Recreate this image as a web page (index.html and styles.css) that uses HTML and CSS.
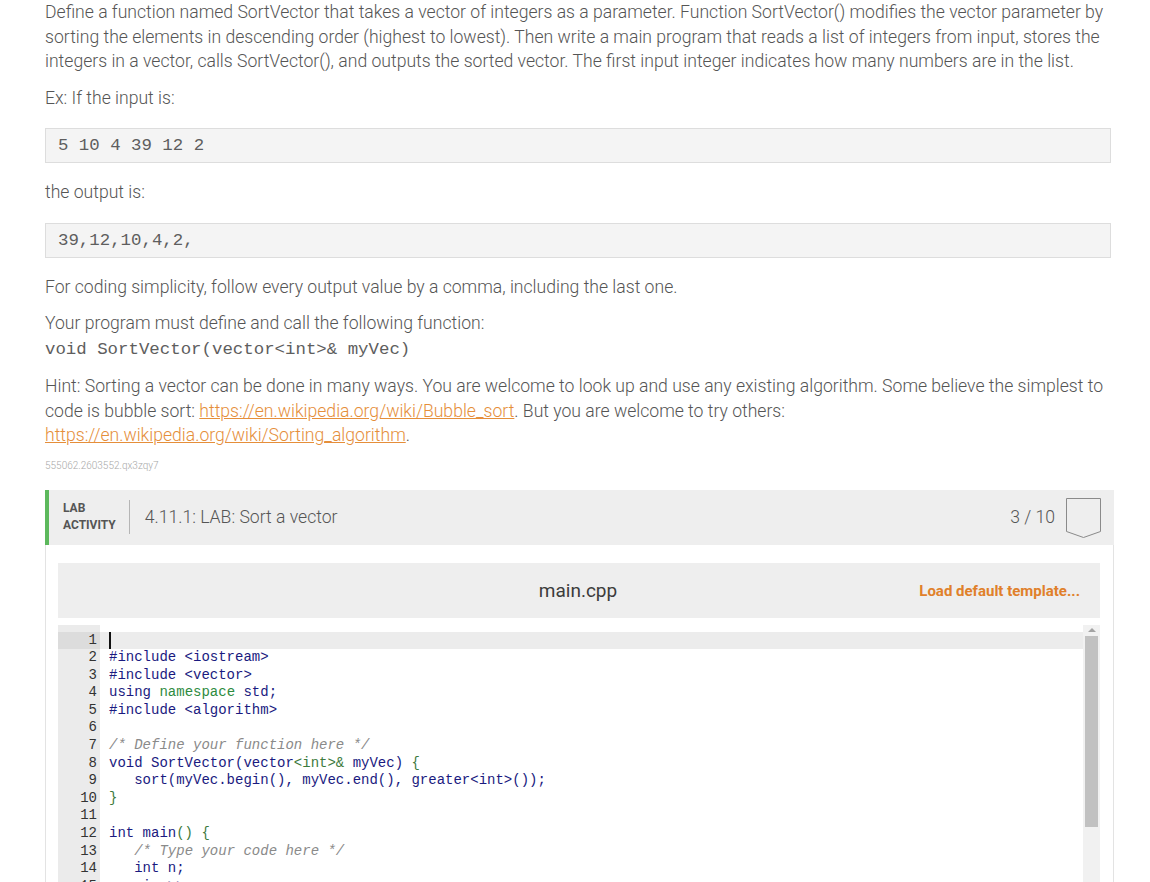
FILE: index.html
```html
<!DOCTYPE html>
<html>
<head>
<meta charset="utf-8">
<link rel="stylesheet" href="styles.css">
</head>
<body>
<div class="page">
  <p class="txt">Define a function named SortVector that takes a vector of integers as a parameter. Function SortVector() modifies the vector parameter by sorting the elements in descending order (highest to lowest). Then write a main program that reads a list of integers from input, stores the integers in a vector, calls SortVector(), and outputs the sorted vector. The first input integer indicates how many numbers are in the list.</p>
  <p class="txt">Ex: If the input is:</p>
  <pre class="sample">5 10 4 39 12 2</pre>
  <p class="txt">the output is:</p>
  <pre class="sample">39,12,10,4,2,</pre>
  <p class="txt">For coding simplicity, follow every output value by a comma, including the last one.</p>
  <p class="txt">Your program must define and call the following function:<br><code class="sig">void SortVector(vector&lt;int&gt;&amp; myVec)</code></p>
  <p class="txt hint">Hint: Sorting a vector can be done in many ways. You are welcome to look up and use any existing algorithm. Some believe the simplest to code is bubble sort: <a class="link" href="#">https://en.wikipedia.org/wiki/Bubble_sort</a>. But you are welcome to try others: <a class="link" href="#">https://en.wikipedia.org/wiki/Sorting_algorithm</a>.</p>
  <p class="uid">555062.2603552.qx3zqy7</p>

  <div class="lab">
    <div class="lab-head">
      <div class="lab-label">LAB<br>ACTIVITY</div>
      <div class="lab-sep"></div>
      <div class="lab-title">4.11.1: LAB: Sort a vector</div>
      <div class="lab-score">3 / 10</div>
      <svg class="badge" width="36" height="41" viewBox="0 0 36 41">
        <polygon points="0.5,0.5 34.5,0.5 34.5,33.5 17.5,39.5 0.5,33.5" fill="none" stroke="#8a8a8a" stroke-width="1"/>
      </svg>
    </div>
    <div class="lab-body">
      <div class="file-bar">
        <span></span>
        <span class="file-name">main.cpp</span>
        <a class="load" href="#">Load default template...</a>
      </div>
      <div class="editor">
        <div class="lines">
          <div class="row active"><span class="num">1</span><span class="code"><span class="caret"></span></span></div>
          <div class="row"><span class="num">2</span><span class="code">#include &lt;iostream&gt;</span></div>
          <div class="row"><span class="num">3</span><span class="code">#include &lt;vector&gt;</span></div>
          <div class="row"><span class="num">4</span><span class="code">using <span class="kw">namespace</span> std;</span></div>
          <div class="row"><span class="num">5</span><span class="code">#include &lt;algorithm&gt;</span></div>
          <div class="row"><span class="num">6</span><span class="code"></span></div>
          <div class="row"><span class="num">7</span><span class="code"><span class="cm">/* Define your function here */</span></span></div>
          <div class="row"><span class="num">8</span><span class="code">void SortVector(vector<span class="br">&lt;int&gt;&amp;</span> myVec) <span class="br">{</span></span></div>
          <div class="row"><span class="num">9</span><span class="code">   sort(myVec.begin(), myVec.end(), greater&lt;int&gt;());</span></div>
          <div class="row"><span class="num">10</span><span class="code"><span class="br">}</span></span></div>
          <div class="row"><span class="num">11</span><span class="code"></span></div>
          <div class="row"><span class="num">12</span><span class="code">int main<span class="br">()</span> <span class="br">{</span></span></div>
          <div class="row"><span class="num">13</span><span class="code">   <span class="cm">/* Type your code here */</span></span></div>
          <div class="row"><span class="num">14</span><span class="code">   int n;</span></div>
          <div class="row"><span class="num">15</span><span class="code">   cin &gt;&gt; n;</span></div>
          <div class="row"><span class="num">16</span><span class="code">   vector&lt;int&gt; v(n);</span></div>
        </div>
        <div class="scroll">
          <div class="scroll-up"></div>
          <div class="thumb"></div>
        </div>
      </div>
    </div>
  </div>
</div>
</body>
</html>
```
FILE: styles.css
```css
html, body {
  margin: 0;
  padding: 0;
  background: #ffffff;
}
body {
  overflow: hidden;
}
.page {
  width: 1069px;
  padding-left: 45px;
  font-family: Roboto, "Liberation Sans", sans-serif;
  font-weight: 300;
  color: #555555;
}
.txt {
  margin: 0 3px 12px 0;
  font-size: 17.6px;
  line-height: 24.5px;
}
.sample {
  margin: 18px 3px 17px 0;
  padding: 8px 12px;
  background: #f4f4f4;
  border: 1px solid #dddddd;
  font-family: "Liberation Mono", monospace;
  font-size: 17.4px;
  line-height: 17px;
  color: #5e5e5e;
}
.sig {
  font-family: "Liberation Mono", monospace;
  font-size: 17.4px;
  color: #5e5e5e;
}
.link {
  color: #e58e3a;
  text-decoration: underline;
}
.hint {
  margin-bottom: 11px;
}
.uid {
  margin: 0 0 17px 0;
  font-size: 10px;
  line-height: 14px;
  color: #a8a8a8;
}
.lab-head {
  display: flex;
  align-items: center;
  height: 55px;
  background: #eeeeee;
  border-left: 4px solid #5cb85c;
  padding: 0 12px 0 14px;
}
.lab-label {
  font-weight: 700;
  font-size: 12px;
  line-height: 17px;
  color: #555555;
}
.lab-sep {
  width: 1px;
  height: 34px;
  background: #b5b5b5;
  margin: 0 15px 0 13px;
}
.lab-title {
  flex: 1;
  font-size: 17.6px;
  color: #555555;
}
.lab-score {
  font-size: 17.6px;
  color: #555555;
  margin-right: 11px;
}
.badge {
  display: block;
  margin-top: 2px;
}
.lab-body {
  border-left: 1px solid #e3e3e3;
  border-right: 1px solid #e3e3e3;
  padding: 18px 13px 0 12px;
}
.file-bar {
  display: grid;
  grid-template-columns: 1fr auto 1fr;
  align-items: center;
  height: 55px;
  background: #eeeeee;
  padding: 0 20px;
}
.file-name {
  font-weight: 400;
  font-size: 19px;
  color: #3c3c3c;
  padding-right: 2px;
}
.load {
  justify-self: end;
  font-weight: 700;
  font-size: 15px;
  color: #e0802a;
  text-decoration: none;
  padding-top: 1px;
}
.editor {
  display: flex;
  margin-top: 7px;
  height: 400px;
  background: #ffffff;
}
.lines {
  flex: 1;
  padding-top: 7px;
  background: linear-gradient(to right, #ebebeb 42px, #ffffff 42px);
  font-family: "Liberation Mono", monospace;
  font-size: 14px;
  line-height: 17.6px;
  font-weight: 400;
  color: #1a1a80;
}
.row {
  display: grid;
  grid-template-columns: 42px 1fr;
  height: 17.6px;
}
.row.active {
  background: #ececec;
}
.row.active .num {
  background: #dcdcdc;
}
.num {
  text-align: right;
  padding-right: 3px;
  color: #333333;
}
.code {
  white-space: pre;
  padding-left: 9px;
}
.caret {
  display: inline-block;
  width: 2px;
  height: 17px;
  background: #111111;
  vertical-align: top;
}
.kw {
  color: #2e8b3e;
}
.br {
  color: #3d7a3d;
}
.cm {
  color: #8a8a8a;
  font-style: italic;
}
.scroll {
  width: 17px;
  background: #f1f1f1;
  display: flex;
  flex-direction: column;
  align-items: center;
}
.scroll-up {
  width: 0;
  height: 0;
  margin-top: 3px;
  border-left: 4px solid transparent;
  border-right: 4px solid transparent;
  border-bottom: 4px solid #a3a3a3;
}
.thumb {
  width: 13px;
  height: 191px;
  margin-top: 4px;
  background: #c1c1c1;
}
```
